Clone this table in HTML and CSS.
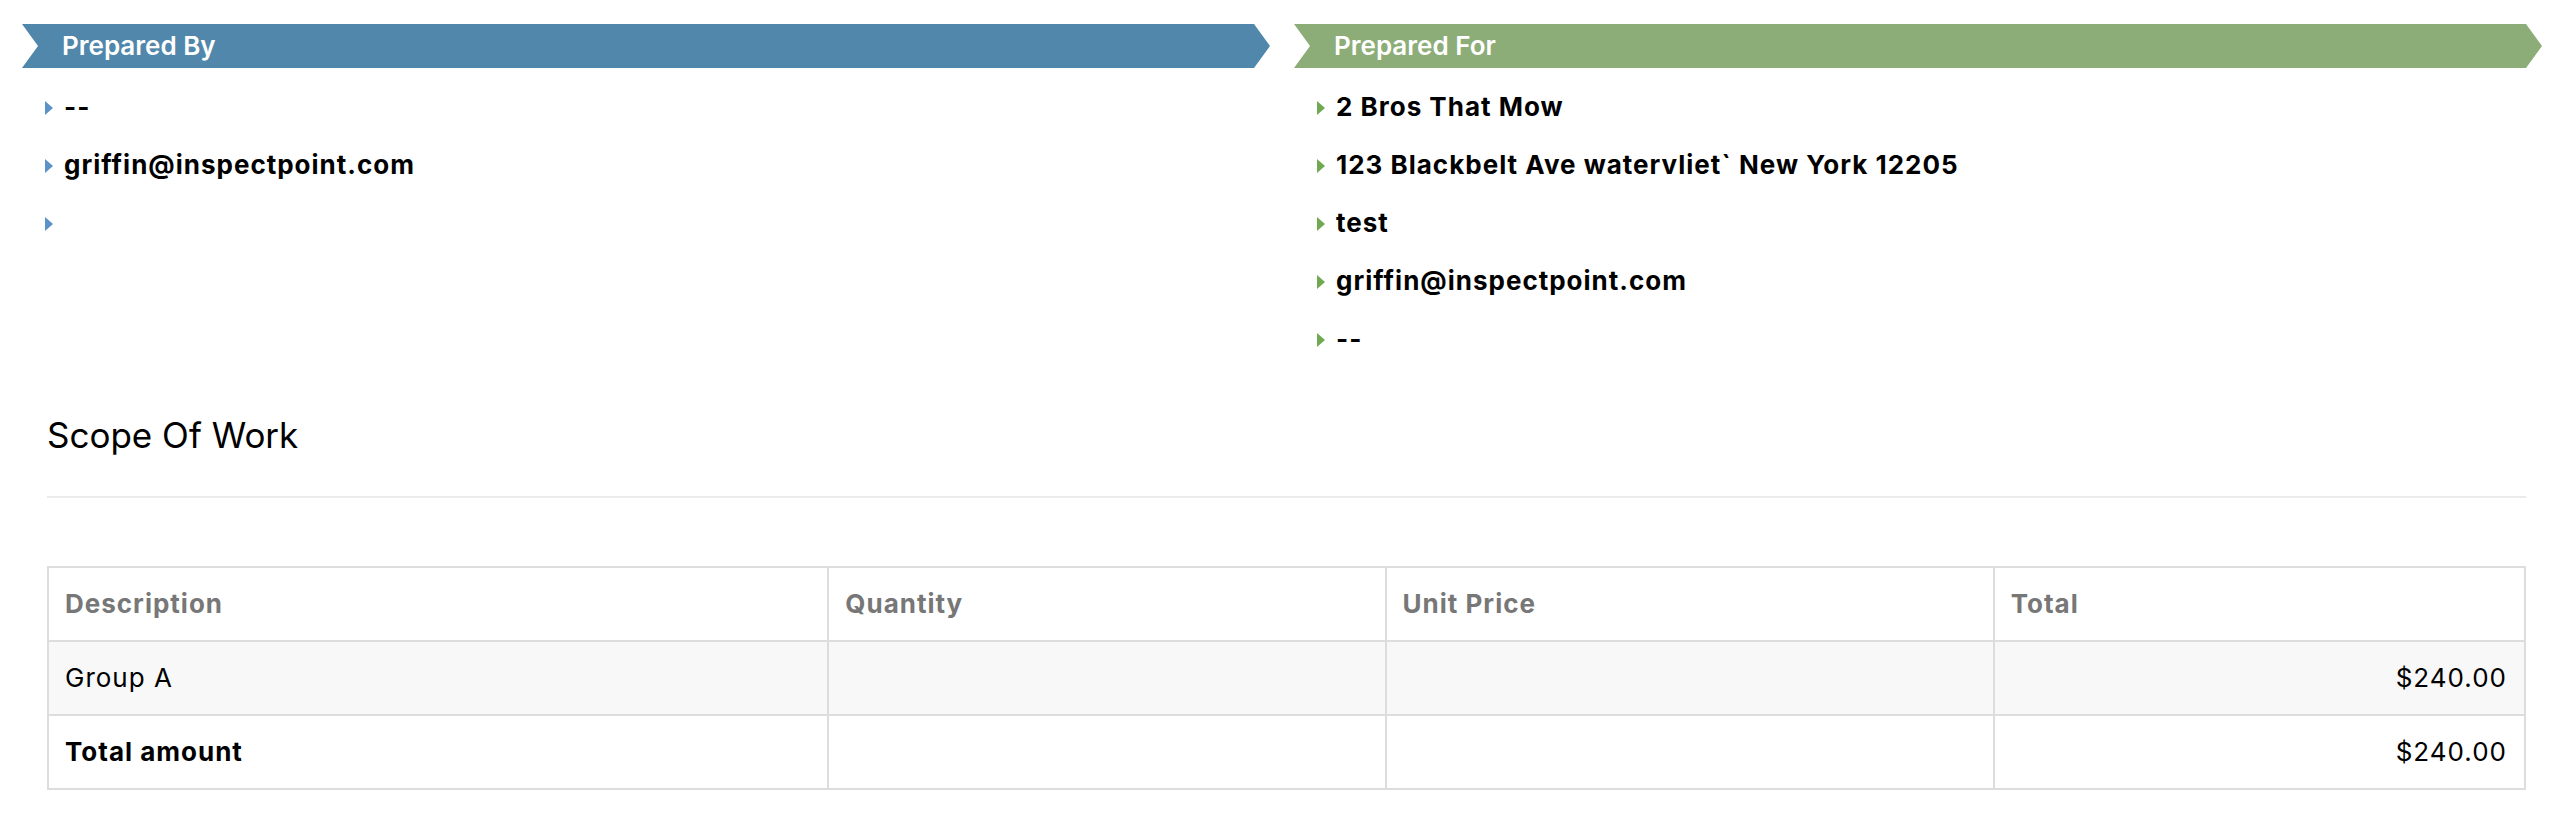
FILE: index.html
```html
<!DOCTYPE html>
<html lang="en">
<head>
<meta charset="utf-8">
<title>Proposal</title>
<link rel="stylesheet" href="styles.css">
</head>
<body>
<div class="page">
  <div class="parties">
    <section class="party party-by">
      <div class="banner">Prepared By</div>
      <ul class="info">
        <li><span class="mark"></span><span>--</span></li>
        <li><span class="mark"></span><span>griffin@inspectpoint.com</span></li>
        <li><span class="mark"></span><span></span></li>
      </ul>
    </section>
    <section class="party party-for">
      <div class="banner">Prepared For</div>
      <ul class="info">
        <li><span class="mark"></span><span>2 Bros That Mow</span></li>
        <li><span class="mark"></span><span>123 Blackbelt Ave watervliet` New York 12205</span></li>
        <li><span class="mark"></span><span>test</span></li>
        <li><span class="mark"></span><span>griffin@inspectpoint.com</span></li>
        <li><span class="mark"></span><span>--</span></li>
      </ul>
    </section>
  </div>

  <section class="scope">
    <h4 class="scope-title">Scope Of Work</h4>
    <hr class="rule">
    <table class="items">
      <colgroup>
        <col class="c-desc">
        <col class="c-qty">
        <col class="c-price">
        <col class="c-total">
      </colgroup>
      <thead>
        <tr>
          <th>Description</th>
          <th>Quantity</th>
          <th>Unit Price</th>
          <th>Total</th>
        </tr>
      </thead>
      <tbody>
        <tr class="row-alt">
          <td>Group A</td>
          <td></td>
          <td></td>
          <td class="num">$240.00</td>
        </tr>
        <tr class="row-total">
          <td><strong>Total amount</strong></td>
          <td></td>
          <td></td>
          <td class="num">$240.00</td>
        </tr>
      </tbody>
    </table>
  </section>
</div>
</body>
</html>
```

FILE: styles.css
```css
* { box-sizing: border-box; }

html, body {
  margin: 0;
  padding: 0;
  background: #ffffff;
}

body {
  font-family: Inter, "Noto Sans", "Liberation Sans", sans-serif;
  font-size: 26px;
  color: #000;
}

.page {
  padding: 24px 26px 0 22px;
}

.parties {
  display: flex;
  gap: 24px;
  align-items: flex-start;
}

.party {
  flex: 1 1 0;
  min-width: 0;
}

.banner {
  height: 44px;
  line-height: 44px;
  padding-left: 40px;
  color: #fff;
  font-weight: 600;
  font-size: 26px;
  clip-path: polygon(0 0, calc(100% - 16px) 0, 100% 50%, calc(100% - 16px) 100%, 0 100%, 16px 50%);
}

.party-by .banner { background: #5087aa; }
.party-for .banner { background: #8dad78; }

.info {
  list-style: none;
  margin: 21px 0 0 0;
  padding: 0 0 0 23px;
}

.info li {
  display: flex;
  align-items: center;
  gap: 11px;
  height: 36px;
  line-height: 36px;
  margin-bottom: 22px;
  font-weight: 700;
  letter-spacing: 1px;
}

.info li:last-child { margin-bottom: 0; }

.mark {
  width: 0;
  height: 0;
  border-top: 7.5px solid transparent;
  border-bottom: 7.5px solid transparent;
  border-left: 8px solid;
  flex: none;
  margin-top: 2px;
}

.party-by .mark { border-left-color: #5b93c9; }
.party-for .mark { border-left-color: #72a852; }

.scope {
  margin: 57px 16px 0 25px;
}

.scope-title {
  margin: 0;
  font-size: 35px;
  line-height: 43px;
  font-weight: 400;
}

.rule {
  margin: 39px 0 0 0;
  border: 0;
  border-top: 2px solid #ebebeb;
  height: 0;
}

.items {
  margin-top: 68px;
  width: 100%;
  border-collapse: collapse;
  table-layout: fixed;
}

.c-desc { width: 31.5%; }
.c-qty { width: 22.5%; }
.c-price { width: 24.55%; }
.c-total { width: 21.45%; }

.items th,
.items td {
  border: 2px solid #dddddd;
  padding: 18px 17px 18px 16px;
  line-height: 36px;
  height: 74px;
  text-align: left;
  vertical-align: middle;
  letter-spacing: 1px;
}

.items th {
  color: #777777;
  font-weight: 700;
}

.items td.num { text-align: right; }

.row-alt td { background: #f8f8f8; }

.row-total strong { font-weight: 700; }
```
